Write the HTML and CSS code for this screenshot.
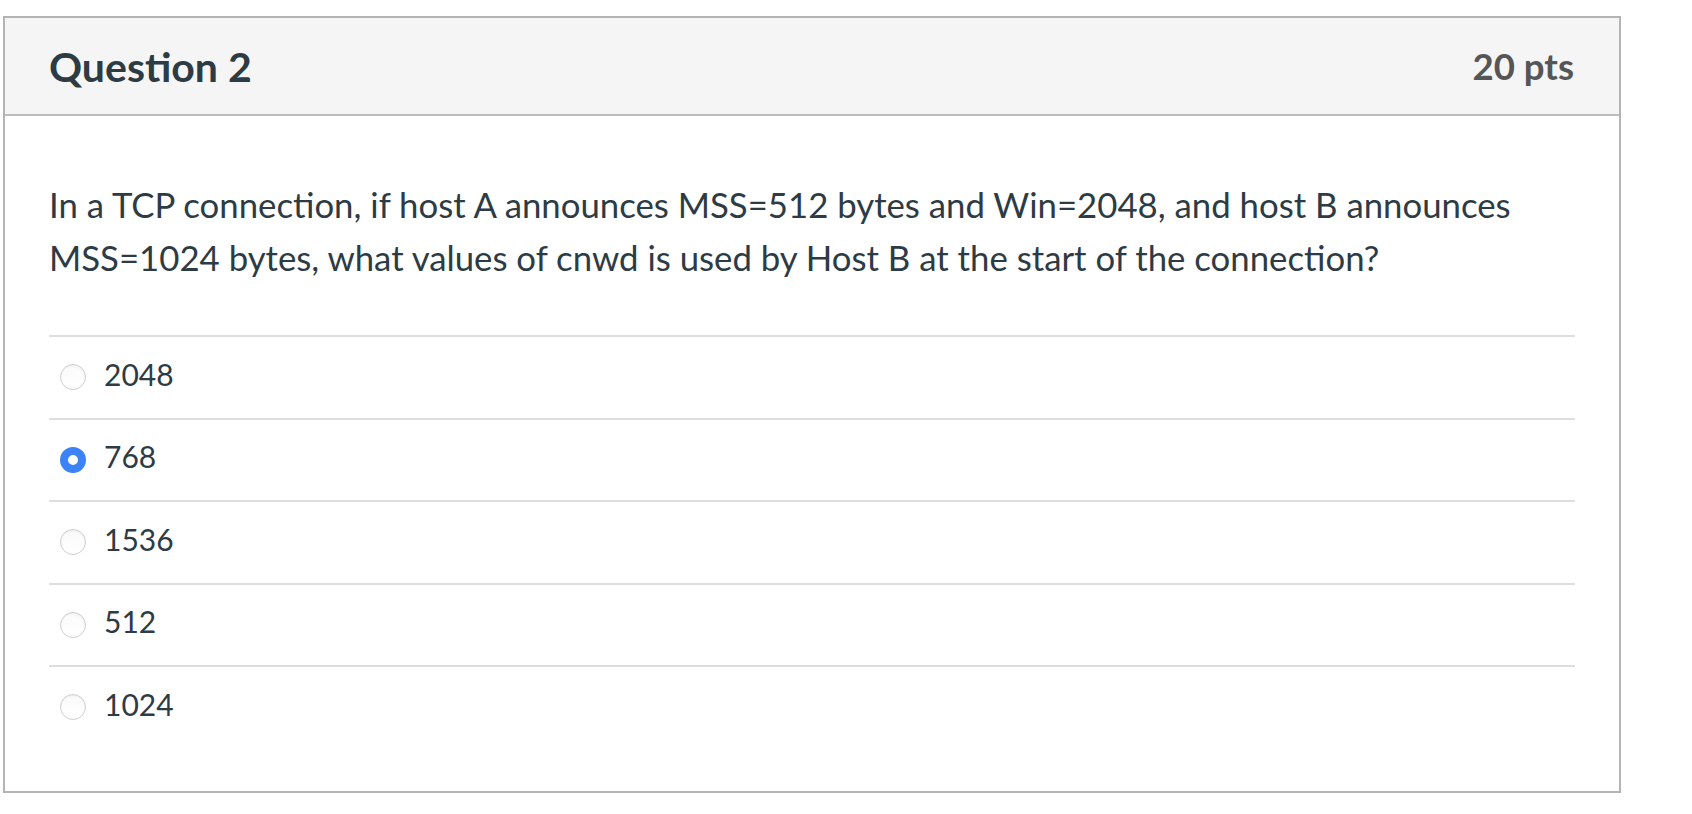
FILE: index.html
```html
<!DOCTYPE html>
<html lang="en">
<head>
<meta charset="utf-8">
<title>Question 2</title>
<link rel="stylesheet" href="styles.css">
</head>
<body>
<div class="question">
  <div class="q-header">
    <h2 class="q-title">Question 2</h2>
    <span class="q-points">20 pts</span>
  </div>
  <div class="q-body">
    <p class="q-text">In a TCP connection, if host A announces MSS=512 bytes and Win=2048, and host B announces MSS=1024 bytes, what values of cnwd is used by Host B at the start of the connection?</p>
    <div class="answers">
      <label class="answer"><span class="radio"></span><span class="a-text">2048</span></label>
      <label class="answer"><span class="radio checked"></span><span class="a-text">768</span></label>
      <label class="answer"><span class="radio"></span><span class="a-text">1536</span></label>
      <label class="answer"><span class="radio"></span><span class="a-text">512</span></label>
      <label class="answer"><span class="radio"></span><span class="a-text">1024</span></label>
    </div>
  </div>
</div>
</body>
</html>
```

FILE: styles.css
```css
html, body {
  margin: 0;
  padding: 0;
  background: #ffffff;
}
body {
  font-family: Lato, "Open Sans", sans-serif;
  color: #2d3b45;
  padding: 16px 0 0 3px;
}
.question {
  width: 1614px;
  border: 2px solid #b4b4b4;
  box-sizing: content-box;
}
.q-header {
  display: flex;
  justify-content: space-between;
  align-items: center;
  background: #f5f5f5;
  border-bottom: 2px solid #bdbdbd;
  height: 96px;
  padding: 0 45px 0 44px;
}
.q-title {
  margin: 0;
  font-size: 41px;
  font-weight: 700;
  color: #2d3b45;
  line-height: 1;
}
.q-points {
  font-size: 36.6px;
  font-weight: 700;
  color: #565656;
  line-height: 1;
}
.q-body {
  padding: 63px 44px 43px 44px;
}
.q-text {
  margin: 0 0 51px 0;
  font-size: 34.75px;
  line-height: 52.5px;
}
.answer {
  display: flex;
  align-items: center;
  height: 80.5px;
  border-top: 2px solid #dedede;
  padding-left: 11px;
}
.radio {
  width: 26px;
  height: 26px;
  box-sizing: border-box;
  border-radius: 50%;
  border: 1px solid #cfcfcf;
  background: linear-gradient(#fafafa, #ffffff);
  box-shadow: inset 0 1px 2px rgba(0,0,0,0.06);
  margin-right: 18px;
  flex: none;
}
.radio.checked {
  border: 8px solid #3b83f6;
  background: #ffffff;
  box-shadow: none;
}
.a-text {
  font-size: 30px;
  line-height: 1;
  margin-bottom: 7px;
}
```
